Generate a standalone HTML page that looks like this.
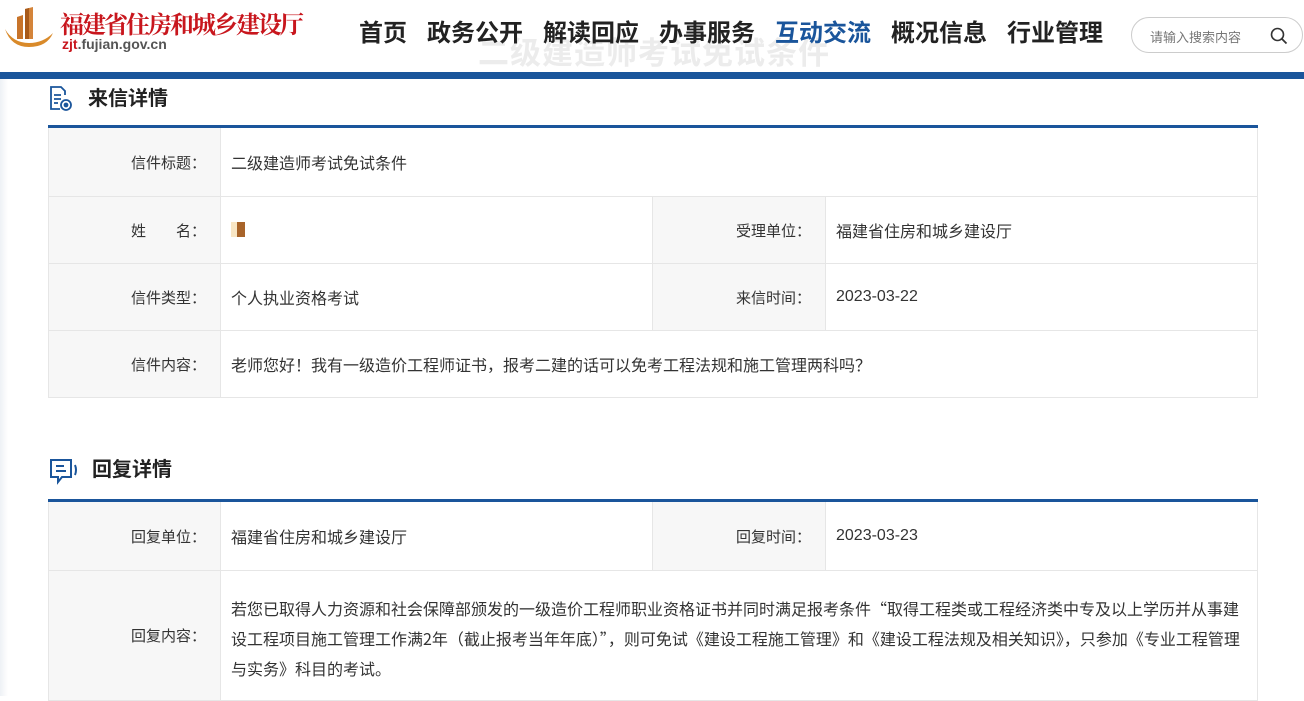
<!DOCTYPE html>
<html><head><meta charset="utf-8">
<style>
*{margin:0;padding:0;box-sizing:border-box}
body{width:1304px;height:696px;overflow:hidden;background:#fff;font-family:"Liberation Sans","Noto Sans CJK SC",sans-serif;color:#333;position:relative}
.hdr{position:absolute;left:0;top:0;width:1304px;height:72px;background:#fff;z-index:1}
.bar{position:absolute;left:0;top:72px;width:1304px;height:7px;background:#1a559b;z-index:2}
.ghost{position:absolute;left:478px;top:36px;font-size:31px;line-height:36px;font-weight:bold;color:#ececec;letter-spacing:1px;z-index:2}
.nav span{position:absolute;top:22px;font-size:24px;line-height:24px;font-weight:bold;color:#222;z-index:3;white-space:nowrap}
.search{position:absolute;left:1131px;top:17px;width:172px;height:36px;border:1px solid #ccc;border-radius:18px;z-index:3;font-size:13px;color:#777;padding:9px 0 0 18px}
.title{position:absolute;font-size:20px;line-height:24px;font-weight:bold;color:#222}
table{position:absolute;left:48px;width:1210px;border-collapse:collapse;border-top:3px solid #1a559b;font-size:16px}
td{border:1px solid #e6e6e6;padding:0 10px}
td.l{background:#f7f7f7;text-align:right;width:172px;padding-right:14px;font-size:15px}
td.l2{width:173px}
</style></head><body>
<div class="hdr">
<svg style="position:absolute;left:3px;top:5px" width="52" height="44" viewBox="0 0 52 44">
<path d="M2 24 Q8 42 26 42 Q44 42 50 28 Q40 38 26 38 Q10 38 2 24Z" fill="#d98a2a"/>
<path d="M14 12 L20 10 L20 34 L14 34Z" fill="#c8742a"/>
<path d="M22 4 L30 2 L30 34 L22 34Z" fill="#d4843a"/>
<path d="M22 4 L26 3 L26 34 L22 34Z" fill="#a85a1a"/>
</svg>
<div style="position:absolute;left:60px;top:5px;font-size:24px;font-weight:bold;color:#c8161d;font-family:'Noto Serif CJK SC',serif;letter-spacing:-2px">福建省住房和城乡建设厅</div>
<div style="position:absolute;left:62px;top:36px;font-size:14px;font-weight:bold;color:#555"><span style="color:#c8161d">zjt</span>.fujian.gov.cn</div>
</div>
<div class="ghost">二级建造师考试免试条件</div>
<div class="nav"><span style="left:359px">首页</span><span style="left:427px">政务公开</span><span style="left:543px">解读回应</span><span style="left:659px">办事服务</span><span style="left:775px;color:#1a559b">互动交流</span><span style="left:891px">概况信息</span><span style="left:1007px">行业管理</span></div>
<div class="search">请输入搜索内容
<svg style="position:absolute;right:14px;top:9px" width="18" height="18" viewBox="0 0 18 18"><circle cx="7.5" cy="7.5" r="6" fill="none" stroke="#333" stroke-width="1.6"/><path d="M12 12l4.5 4.5" stroke="#333" stroke-width="1.8"/></svg></div>
<div class="bar"></div>
<div style="position:absolute;left:0;top:79px;width:8px;height:617px;background:linear-gradient(to right,#eef1f5,#fff)"></div>

<svg style="position:absolute;left:48px;top:86px" width="26" height="26" viewBox="0 0 26 26" fill="none" stroke="#1a559b" stroke-width="1.8"><path d="M17 9V5l-4-4H3v22h9"/><path d="M6 9h7M6 13h7M6 17h4"/><circle cx="18" cy="19" r="5"/><circle cx="18" cy="19" r="1.5" fill="#1a559b"/></svg>
<div class="title" style="left:88px;top:87px">来信详情</div>
<table style="top:125px">
<tr style="height:70px"><td class="l">信件标题：</td><td colspan="3">二级建造师考试免试条件</td></tr>
<tr style="height:67px"><td class="l">姓　　名：</td><td style="width:432px"><span style="display:inline-block;width:6px;height:15px;background:#f8e6c4;vertical-align:middle"></span><span style="display:inline-block;width:8px;height:15px;background:#a8642a;vertical-align:middle"></span></td><td class="l l2">受理单位：</td><td>福建省住房和城乡建设厅</td></tr>
<tr style="height:67px"><td class="l">信件类型：</td><td>个人执业资格考试</td><td class="l l2">来信时间：</td><td>2023-03-22</td></tr>
<tr style="height:67px"><td class="l">信件内容：</td><td colspan="3">老师您好！我有一级造价工程师证书，报考二建的话可以免考工程法规和施工管理两科吗？</td></tr>
</table>

<svg style="position:absolute;left:48px;top:457px" width="32" height="30" viewBox="0 0 32 30" fill="none" stroke="#1a559b" stroke-width="2"><path d="M3 3h20v17H14l-4 5v-5H3z"/><path d="M8 9h8M8 14h10"/><path d="M27 8q2 5 0 10"/></svg>
<div class="title" style="left:92px;top:458px">回复详情</div>
<table style="top:499px">
<tr style="height:70px"><td class="l">回复单位：</td><td style="width:432px">福建省住房和城乡建设厅</td><td class="l l2">回复时间：</td><td>2023-03-23</td></tr>
<tr style="height:130px"><td class="l">回复内容：</td><td colspan="3" style="line-height:30px;padding-top:4px;padding-right:14px;font-family:'Noto Sans CJK SC','Liberation Sans',sans-serif">若您已取得人力资源和社会保障部颁发的一级造价工程师职业资格证书并同时满足报考条件“取得工程类或工程经济类中专及以上学历并从事建设工程项目施工管理工作满2年（截止报考当年年底）”，则可免试《建设工程施工管理》和《建设工程法规及相关知识》，只参加《专业工程管理与实务》科目的考试。</td></tr>
</table>
</body></html>
